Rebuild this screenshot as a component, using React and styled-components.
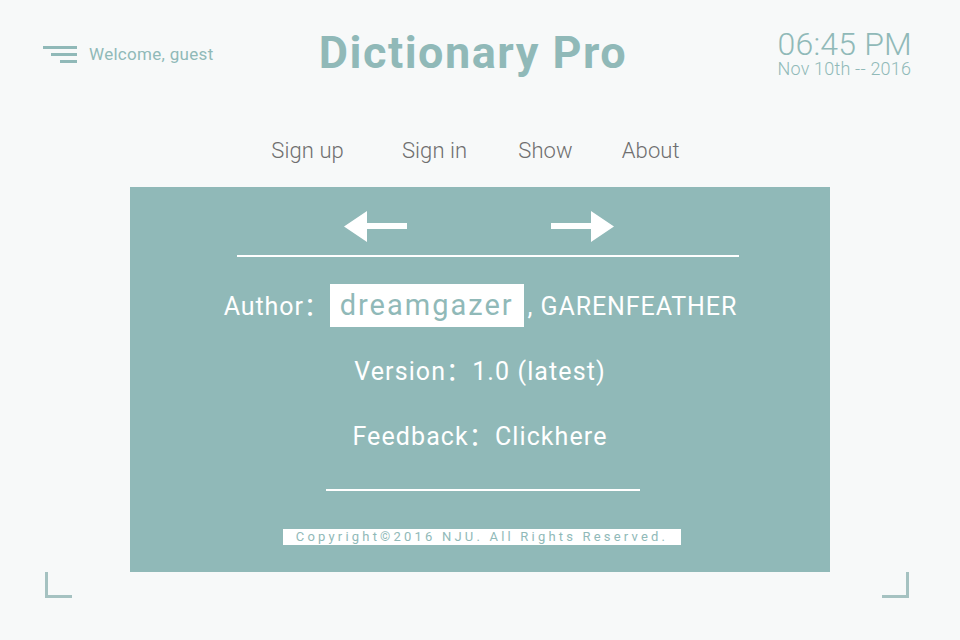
import React from "react";
import styled, { createGlobalStyle } from "styled-components";

const GlobalStyle = createGlobalStyle`
  html, body {
    margin: 0;
    padding: 0;
    background: #f7f9f9;
  }
  body {
    font-family: Roboto, "Noto Sans", "Noto Sans CJK SC", sans-serif;
  }
`;

const teal = "#90b9b8";

const Page = styled.div`
  width: 960px;
  height: 640px;
  overflow: hidden;
  background: #f7f9f9;
`;

const Header = styled.header`
  height: 110px;
  display: grid;
  grid-template-columns: 1fr auto 1fr;
  align-items: start;
  padding: 0 50px 0 43px;
  box-sizing: border-box;
`;

const Welcome = styled.div`
  display: flex;
  align-items: center;
  gap: 12px;
  margin-top: 44px;
  color: ${teal};
  font-size: 17px;
  line-height: 20px;
  letter-spacing: 0.3px;
`;

const Burger = styled.div`
  display: flex;
  flex-direction: column;
  align-items: flex-end;
  gap: 4px;
  width: 34px;
  span {
    display: block;
    height: 3px;
    background: ${teal};
  }
`;

const Title = styled.h1`
  margin: 27px 7px 0 0;
  font-size: 45px;
  line-height: 52px;
  font-weight: 700;
  color: ${teal};
  letter-spacing: 1.5px;
`;

const Clock = styled.div`
  justify-self: end;
  margin: 29px -2px 0 0;
  color: ${teal};
  font-weight: 300;
  display: flex;
  flex-direction: column;
  align-items: flex-start;
`;

const Time = styled.div`
  font-size: 32px;
  line-height: 30px;
  letter-spacing: 0.2px;
`;

const DateLine = styled.div`
  margin-top: 2px;
  font-size: 18px;
  line-height: 16px;
  letter-spacing: 0.2px;
`;

const Nav = styled.nav`
  height: 77px;
  display: flex;
  justify-content: center;
  align-items: flex-start;
  padding-right: 9px;
  box-sizing: border-box;
`;

const NavItem = styled.a`
  margin-top: 27px;
  margin-right: ${(p) => p.$gap || 0}px;
  font-size: 22px;
  line-height: 28px;
  font-weight: 300;
  color: #6f6f6f;
  text-decoration: none;
  letter-spacing: 0.1px;
`;

const Panel = styled.section`
  width: 700px;
  height: 385px;
  margin-left: 130px;
  background: ${teal};
  color: #fff;
  display: flex;
  flex-direction: column;
  align-items: center;
  box-sizing: border-box;
  padding-top: 24px;
`;

const Arrows = styled.div`
  display: flex;
  justify-content: center;
  gap: 144px;
  margin-left: -2px;
  height: 31px;
  svg {
    display: block;
  }
`;

const Rule = styled.div`
  height: 2px;
  background: #fff;
  width: ${(p) => p.$w}px;
  margin-top: ${(p) => p.$top}px;
  margin-left: ${(p) => p.$shift || 0}px;
`;

const Row = styled.div`
  display: flex;
  align-items: ${(p) => (p.$baseline ? "baseline" : "center")};
  justify-content: center;
  height: ${(p) => p.$h || 40}px;
  margin-top: ${(p) => p.$top}px;
  margin-left: ${(p) => p.$shift || 0}px;
  font-size: 25px;
  letter-spacing: ${(p) => (p.$tight ? 0.9 : 1.1)}px;
`;

const Highlight = styled.span`
  display: inline-block;
  height: 43px;
  line-height: 42px;
  padding: 0 10px;
  margin: 0 4px 0 0;
  box-sizing: border-box;
  background: #fff;
  color: ${teal};
  font-size: 29px;
  letter-spacing: 2px;
`;

const Copyright = styled.div`
  margin-top: 38px;
  margin-left: 4px;
  width: 398px;
  height: 16px;
  background: #fff;
  color: ${teal};
  font-size: 13px;
  line-height: 16px;
  letter-spacing: 3.2px;
  text-align: center;
`;

const Corners = styled.div`
  display: flex;
  justify-content: space-between;
  padding: 0 51px 0 45px;
`;

const Corner = styled.div`
  width: 27px;
  height: 26px;
  box-sizing: border-box;
  border-bottom: 3px solid #a5c2c1;
  ${(p) => (p.$right ? "border-right" : "border-left")}: 3px solid #a5c2c1;
`;

function Arrow({ right }) {
  const pts = right
    ? "63,15.5 40,0 40,12 0,12 0,18 40,18 40,31"
    : "0,15.5 23,0 23,12 63,12 63,18 23,18 23,31";
  return (
    <svg width="63" height="31" viewBox="0 0 63 31">
      <polygon points={pts} fill="#fff" />
    </svg>
  );
}

export default function App() {
  return (
    <Page>
      <GlobalStyle />
      <Header>
        <Welcome>
          <Burger>
            <span style={{ width: 34 }} />
            <span style={{ width: 26 }} />
            <span style={{ width: 17 }} />
          </Burger>
          Welcome, guest
        </Welcome>
        <Title>Dictionary Pro</Title>
        <Clock>
          <Time>06:45 PM</Time>
          <DateLine>Nov 10th -- 2016</DateLine>
        </Clock>
      </Header>
      <Nav>
        <NavItem href="#" $gap={58}>Sign up</NavItem>
        <NavItem href="#" $gap={51}>Sign in</NavItem>
        <NavItem href="#" $gap={49}>Show</NavItem>
        <NavItem href="#">About</NavItem>
      </Nav>
      <Panel>
        <Arrows>
          <Arrow />
          <Arrow right />
        </Arrows>
        <Rule $w={502} $top={13} $shift={16} />
        <Row $baseline $tight $h={43} $top={27} $shift={1}>
          Author：<Highlight>dreamgazer</Highlight>, GARENFEATHER
        </Row>
        <Row $top={22}>Version：1.0 (latest)</Row>
        <Row $top={25}>Feedback：Clickhere</Row>
        <Rule $w={314} $top={35} $shift={6} />
        <Copyright>Copyright©2016 NJU. All Rights Reserved.</Copyright>
      </Panel>
      <Corners>
        <Corner />
        <Corner $right />
      </Corners>
    </Page>
  );
}
